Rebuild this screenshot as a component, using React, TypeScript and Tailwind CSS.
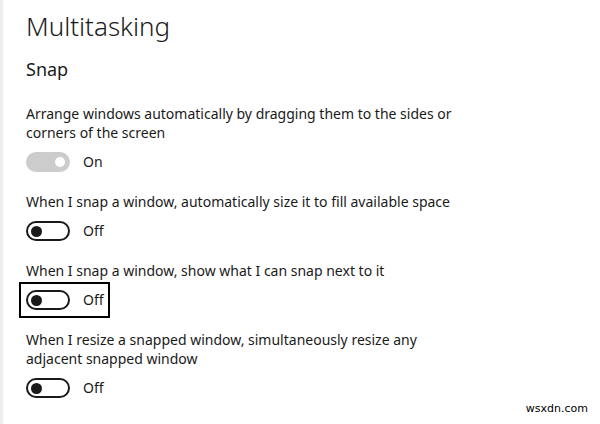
import React from "react";

interface Setting {
  label: string[];
  on: boolean;
  disabled?: boolean;
  focused?: boolean;
}

const SETTINGS: Setting[] = [
  {
    label: [
      "Arrange windows automatically by dragging them to the sides or",
      "corners of the screen",
    ],
    on: true,
    disabled: true,
  },
  { label: ["When I snap a window, automatically size it to fill available space"], on: false },
  { label: ["When I snap a window, show what I can snap next to it"], on: false, focused: true },
  {
    label: [
      "When I resize a snapped window, simultaneously resize any",
      "adjacent snapped window",
    ],
    on: false,
  },
];

function Toggle({ on, disabled }: { on: boolean; disabled?: boolean }) {
  if (on && disabled) {
    return (
      <div className="w-[44px] h-[20px] rounded-full bg-[#cccccc] flex items-center justify-end px-[5px]">
        <div className="w-[10px] h-[10px] rounded-full bg-white" />
      </div>
    );
  }
  return (
    <div className="w-[44px] h-[20px] rounded-full border-2 border-[#1a1a1a] flex items-center px-[3px]">
      <div className="w-[11px] h-[11px] rounded-full bg-[#1a1a1a]" />
    </div>
  );
}

export default function App() {
  return (
    <div
      className="relative w-[600px] h-[424px] bg-white overflow-hidden border-l-[3px] border-[#eceef2] text-[#1a1a1a]"
      style={{ fontFamily: '"Noto Sans", "Open Sans", sans-serif' }}
    >
      <div className="pl-[23px] pt-[9px]">
        <h1 className="text-[26px] leading-[34px] font-light">Multitasking</h1>
        <h2 className="text-[18px] leading-[24px] mt-[14px]">Snap</h2>

        <div className="mt-[23px] flex flex-col gap-[20px]">
          {SETTINGS.map((s, i) => (
            <div key={i}>
              <p className="text-[14px] leading-[19px]">
                {s.label.map((line, j) => (
                  <span key={j} className="block">
                    {line}
                  </span>
                ))}
              </p>
              <div className="mt-[10px] flex">
                <div
                  className={`flex items-center gap-[13px] ${
                    s.focused ? "-ml-[7px] -my-[8px] pl-[5px] pr-[4px] py-[6px] border-2 border-black" : ""
                  }`}
                >
                  <Toggle on={s.on} disabled={s.disabled} />
                  <span className="text-[14px] leading-[20px]">{s.on ? "On" : "Off"}</span>
                </div>
              </div>
            </div>
          ))}
        </div>
      </div>

      <span
        className="absolute right-[12px] bottom-[7px] text-[11px] text-black"
        style={{ fontFamily: '"DejaVu Sans", sans-serif' }}
      >
        wsxdn.com
      </span>
    </div>
  );
}
